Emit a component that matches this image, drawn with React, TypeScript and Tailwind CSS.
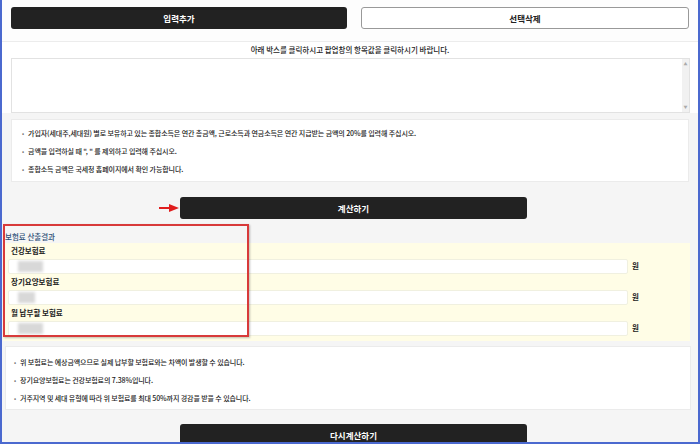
import React from 'react';

const font = { fontFamily: '"Noto Sans CJK KR", "Noto Sans", sans-serif' };

const Note = ({ children }: { children: React.ReactNode }) => (
  <li className="flex items-center h-[18px] text-[7px] font-medium text-[#222] tracking-[-0.1px]">
    <span className="text-[#777] mr-[4px] text-[6px]">•</span>
    {children}
  </li>
);

const ResultRow = ({ label, blur }: { label: string; blur: string }) => (
  <div>
    <div className="h-[15px] flex items-center pl-[8px] text-[7.5px] font-semibold text-[#222]">{label}</div>
    <div className="h-[16px] flex items-center">
      <div className="ml-[5px] w-[620px] h-[15px] bg-white border border-[#f0f0e0] rounded-[2px] flex items-center pl-[9px]">
        <div className={`${blur} h-[11px] bg-[#d8d8d8] blur-[1.5px]`}></div>
      </div>
      <span className="ml-[4px] text-[7.5px] font-bold text-[#222]">원</span>
    </div>
  </div>
);

export default function App() {
  return (
    <div style={font} className="w-[700px] h-[444px] bg-white border-x-2 border-b-2 border-[#4b69cf] overflow-hidden">
      {/* 상단 버튼 */}
      <div className="pt-[7px] pb-[12px] pl-[9px] pr-[9px] flex gap-[14px] border-b border-[#ececec] bg-[#fdfdfd]">
        <button className="w-[336px] h-[22px] bg-[#222] rounded-[3px] text-white text-[8.5px] font-bold">입력추가</button>
        <button className="flex-1 h-[22px] bg-white border border-[#999] rounded-[3px] text-[#222] text-[8.5px] font-bold">선택삭제</button>
      </div>

      <div className="h-[16px] flex items-center justify-center text-[7.5px] font-medium text-[#222]">
        아래 박스를 클릭하시고 팝업창의 항목값을 클릭하시기 바랍니다.
      </div>
      <div className="ml-[9px] w-[679px] h-[55px] border border-[#e2e2e2] bg-white flex justify-end">
        <div className="w-[7px] h-full bg-[#f1f1f1] flex flex-col justify-between items-center text-[4px] text-[#aaa] py-[2px]">
          <span>▲</span>
          <span>▼</span>
        </div>
      </div>

      {/* 회색 영역 */}
      <div className="bg-[#f5f5f5] pt-[6px] h-[329px]">
        <ul className="ml-[9px] w-[678px] h-[63px] bg-white border border-[#ebebeb] pt-[4px] pl-[10px]">
          <Note>가입자(세대주,세대원) 별로 보유하고 있는 종합소득은 연간 총금액, 근로소득과 연금소득은 연간 지급받는 금액의 20%를 입력해 주십시오.</Note>
          <Note>금액을 입력하실 때 &quot;, &quot; 를 제외하고 입력해 주십시오.</Note>
          <Note>종합소득 금액은 국세청 홈페이지에서 확인 가능합니다.</Note>
        </ul>

        <div className="flex items-center pt-[15px] pl-[156px]">
          <svg width="22" height="10" viewBox="0 0 22 10">
            <line x1="1" y1="5" x2="13" y2="5" stroke="#e01d1d" strokeWidth="2" />
            <path d="M11 1 L21 5 L11 9 Z" fill="#e01d1d" />
          </svg>
          <button className="w-[347px] h-[22px] bg-[#222] rounded-[3px] text-white text-[8.5px] font-bold">계산하기</button>
        </div>

        {/* 결과 */}
        <div className="relative mt-[5px]">
          <div className="h-[19px] flex items-end pl-[3px] pb-[1px] text-[7.5px] text-[#2d4f76] font-medium">보험료 산출결과</div>
          <div className="ml-[1px] w-[687px] bg-[#fffde6] pb-[5px]">
            <ResultRow label="건강보험료" blur="w-[25px]" />
            <ResultRow label="장기요양보험료" blur="w-[17px]" />
            <ResultRow label="월 납부할 보험료" blur="w-[25px]" />
          </div>
          <div className="absolute left-[1px] top-0 w-[246px] h-[113px] border-2 border-[#d83a3a] shadow-[1px_1px_2px_rgba(0,0,0,0.25)]"></div>
        </div>

        <ul className="mt-[5px] ml-[3px] w-[686px] h-[64px] bg-white border border-[#ebebeb] pt-[6px] pl-[8px]">
          <Note>위 보험료는 예상금액으므로 실제 납부할 보험료와는 차액이 발생할 수 있습니다.</Note>
          <Note>장기요양보험료는 건강보험료의 7.38%입니다.</Note>
          <Note>거주지역 및 세대 유형에 따라 위 보험료를 최대 50%까지 경감을 받을 수 있습니다.</Note>
        </ul>

        <div className="pt-[10px] pl-[178px]">
          <button className="w-[347px] h-[22px] bg-[#222] rounded-[3px] text-white text-[8.5px] font-bold">다시계산하기</button>
        </div>
      </div>
    </div>
  );
}
